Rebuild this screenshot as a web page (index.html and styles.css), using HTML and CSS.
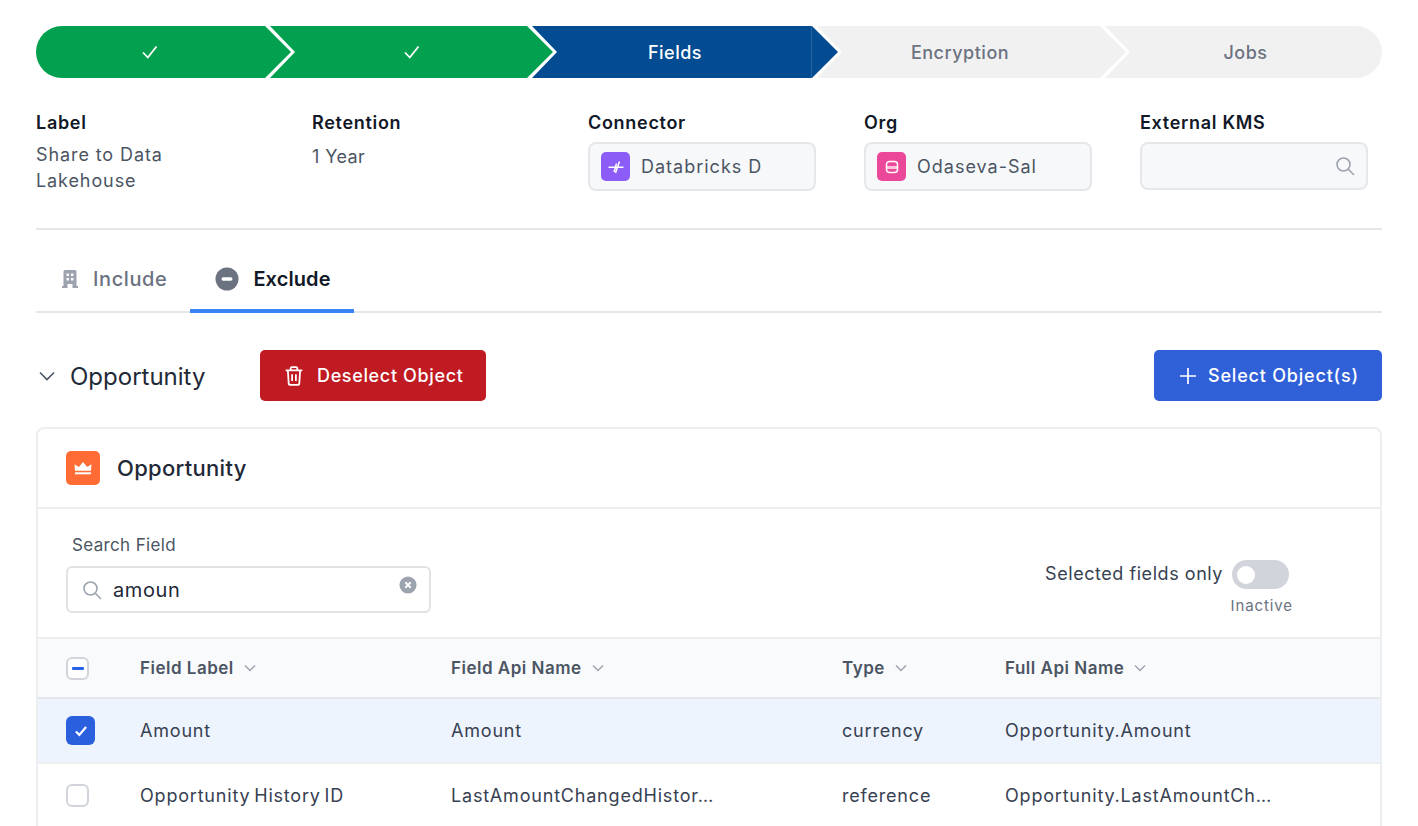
FILE: index.html
```html
<!DOCTYPE html>
<html lang="en">
<head>
<meta charset="utf-8">
<title>Fields</title>
<link rel="stylesheet" href="styles.css">
</head>
<body>
<main class="page">
  <nav class="stepper">
    <div class="step step-first step-done step-a"><svg class="step-check" viewBox="0 0 20 20"><path d="M3 10.500 7.800 15.500 16.500 4.500"/></svg></div>
    <div class="step step-done step-b"><svg class="step-check" viewBox="0 0 20 20"><path d="M3 10.500 7.800 15.500 16.500 4.500"/></svg></div>
    <div class="step step-active step-c">Fields</div>
    <div class="step step-todo step-d">Encryption</div>
    <div class="step step-last step-todo step-e">Jobs</div>
  </nav>

  <section class="info">
    <div class="info-col"><div class="info-label">Label</div><div class="info-text">Share to Data<br>Lakehouse</div></div>
    <div class="info-col"><div class="info-label">Retention</div><div class="info-text info-text-single">1 Year</div></div>
    <div class="info-col"><div class="info-label">Connector</div>
      <div class="field"><span class="chip chip-purple"><svg viewBox="0 0 20 20"><path d="M2.500 10.200h15M13.500 4.500 9.500 16M10.500 6.500 8 15"/></svg></span><span>Databricks D</span></div></div>
    <div class="info-col"><div class="info-label">Org</div>
      <div class="field"><span class="chip chip-pink"><svg viewBox="0 0 20 20"><rect class="chip-band" x="4.500" y="9" width="11" height="3"/><rect x="4.500" y="4.500" width="11" height="11" rx="3"/></svg></span><span>Odaseva-Sal</span></div></div>
    <div class="info-col"><div class="info-label">External KMS</div>
      <div class="field field-search"><svg class="icon-search" viewBox="0 0 20 20"><circle cx="8.500" cy="8.500" r="6.500"/><path d="m13.300 13.300 5.700 5.700"/></svg></div></div>
  </section>

  <div class="tabs">
    <div class="tab"><svg class="tab-building" viewBox="0 0 16 18"><path fill-rule="evenodd" d="M1.500 1.500A1.500 1.500 0 0 1 3 0h10a1.500 1.500 0 0 1 1.500 1.500V16H16v2h-5.500v-4h-5v4H0v-2h1.500V1.500ZM4.500 3.500v2.500h2.500V3.500H4.500Zm4.500 0v2.500h2.500V3.500H9ZM4.500 8v2.500h2.500V8H4.500Zm4.500 0v2.500h2.500V8H9Z"/></svg><span>Include</span></div>
    <div class="tab tab-active"><svg class="tab-minus" viewBox="0 0 24 24"><circle cx="12" cy="12" r="11.500"/><rect x="6.500" y="10.300" width="11" height="3.400" rx="1.700"/></svg><span>Exclude</span></div>
  </div>

  <div class="toolbar">
    <div class="toolbar-left">
      <svg class="chevron-lg" viewBox="0 0 16 10"><path d="m1 1.500 7 7 7-7"/></svg>
      <span class="toolbar-title">Opportunity</span>
      <button class="btn btn-red"><svg class="btn-trash" viewBox="2 1 16 18"><path d="M2.500 5h15M7 5V3.200C7 2.500 7.500 2 8.200 2h3.600c.7 0 1.200.5 1.200 1.200V5M4.500 5l.7 11.200c0 1 .8 1.800 1.800 1.800h6c1 0 1.800-.8 1.800-1.800L15.500 5M8.300 8.500v6M11.700 8.500v6"/></svg>Deselect Object</button>
    </div>
    <button class="btn btn-blue"><svg class="btn-plus" viewBox="0 0 18 18"><path d="M9 1v16M1 9h16"/></svg>Select Object(s)</button>
  </div>

  <section class="card">
    <header class="card-head">
      <span class="card-icon"><svg viewBox="0 0 20 20"><path d="M2 12.800 1.500 6.300 5.800 9 10 4l4.200 5 4.300-2.700-.5 6.500Z"/><rect x="2" y="14.300" width="16" height="2"/></svg></span>
      <span class="card-title">Opportunity</span>
    </header>
    <div class="filters">
      <div class="search-block">
        <div class="search-label">Search Field</div>
        <div class="search-box">
          <svg class="icon-search icon-search-left" viewBox="0 0 20 20"><circle cx="8.500" cy="8.500" r="6.500"/><path d="m13.300 13.300 5.700 5.700"/></svg>
          <span class="search-value">amoun</span>
          <svg class="search-clear" viewBox="0 0 20 20"><circle cx="10" cy="10" r="9.500"/><path d="m7 7 6 6M13 7l-6 6"/></svg>
        </div>
      </div>
      <div class="toggle-block">
        <div class="toggle-row"><span class="toggle-label">Selected fields only</span><span class="toggle"><span class="toggle-knob"></span></span></div>
        <div class="toggle-state">Inactive</div>
      </div>
    </div>
    <div class="row row-head">
      <span class="cb cb-mixed"><span class="cb-dash"></span></span>
      <span class="th">Field Label<svg class="chevron" viewBox="0 0 12 8"><path d="m1 1.500 5 5 5-5"/></svg></span>
      <span class="th">Field Api Name<svg class="chevron" viewBox="0 0 12 8"><path d="m1 1.500 5 5 5-5"/></svg></span>
      <span class="th">Type<svg class="chevron" viewBox="0 0 12 8"><path d="m1 1.500 5 5 5-5"/></svg></span>
      <span class="th">Full Api Name<svg class="chevron" viewBox="0 0 12 8"><path d="m1 1.500 5 5 5-5"/></svg></span>
    </div>
    <div class="row row-body row-selected">
      <span class="cb cb-on"><svg viewBox="0 0 16 16"><path d="m3.500 8.500 3 3 6-7"/></svg></span>
      <span class="td">Amount</span><span class="td">Amount</span><span class="td">currency</span><span class="td">Opportunity.Amount</span>
    </div>
    <div class="row row-body">
      <span class="cb"></span>
      <span class="td">Opportunity History ID</span><span class="td">LastAmountChangedHistor…</span><span class="td">reference</span><span class="td">Opportunity.LastAmountCh…</span>
    </div>
  </section>
</main>
</body>
</html>
```
FILE: styles.css
```css
* { box-sizing: border-box; }
html, body { margin: 0; height: 826px; overflow: hidden; background: #fff; }
body { font-family: Inter, "Liberation Sans", sans-serif; color: #111827; }
.page { padding: 26px 36px 0; }

/* stepper */
.stepper { display: flex; height: 52px; }
.step { height: 52px; display: flex; align-items: center; justify-content: center; font-size: 18px; font-weight: 500; letter-spacing: .5px; flex: none; margin-right: -21px; }
.step-first { border-radius: 26px 0 0 26px; }
.step-last { border-radius: 0 26px 26px 0; margin-right: 0; }
.step-done { background: #03a04f; }
.step-active { background: linear-gradient(to right, #034c92 279px, #2a649f 279px, #2a649f 280px, #034c92 280px); color: #fff; }
.step-todo { background: #f1f1f2; color: #6b7280; }
.step-a { width: 255px; padding-right: 27px; clip-path: polygon(0 0, 229px 0, 100% 50%, 229px 100%, 0 100%); }
.step-b { width: 283px; clip-path: polygon(0 0, 257px 0, 100% 50%, 257px 100%, 0 100%, 25px 50%); }
.step-c { width: 306px; padding-right: 20px; clip-path: polygon(0 0, 280px 0, 100% 50%, 280px 100%, 0 100%, 25px 50%); }
.step-d { width: 309px; padding-right: 23px; clip-path: polygon(0 0, 283px 0, 100% 50%, 283px 100%, 0 100%, 25px 50%); }
.step-e { width: 277px; padding-left: 4px; clip-path: polygon(0 0, 100% 0, 100% 100%, 0 100%, 25px 50%); }
.step-check { width: 20px; height: 20px; fill: none; stroke: #fff; stroke-width: 1.800; }

/* info */
.info { display: grid; grid-template-columns: repeat(5, 228px); column-gap: 48px; margin-top: 32px; height: 118px; }
.info-label { font-size: 18px; font-weight: 600; line-height: 26px; color: #111827; letter-spacing: .7px; }
.info-text { font-size: 18px; line-height: 26px; color: #4b5563; margin-top: 6px; letter-spacing: .9px; }
.info-text-single { margin-top: 8px; letter-spacing: .4px; }
.field { height: 49px; margin-top: 6px; width: 228px; background: #f7f8fa; border: 2px solid #e5e7eb; border-radius: 8px; display: flex; align-items: center; padding: 0 11px; gap: 11px; font-size: 18px; color: #4b5563; letter-spacing: 1px; }
.field-search { justify-content: flex-end; height: 48px; }
.chip { width: 29px; height: 29px; border-radius: 5px; display: flex; align-items: center; justify-content: center; flex: none; }
.chip svg { width: 20px; height: 20px; fill: none; stroke: #fff; stroke-width: 1.500; }
.chip-purple { background: #8b5cf6; }
.chip-pink { background: #ec4899; }
.chip-pink .chip-band { fill: #fbc4de; stroke: none; }
.icon-search { width: 20px; height: 20px; fill: none; stroke: #9ca3af; stroke-width: 1.600; flex: none; }

/* tabs */
.tabs { display: flex; height: 85px; border-top: 2px solid #e5e7eb; border-bottom: 2px solid #e5e7eb; }
.tab { display: flex; align-items: center; gap: 15px; font-size: 20px; font-weight: 500; letter-spacing: .6px; color: #6b7280; padding: 28px 23px 11px 26px; height: 85px; margin-top: -2px; }
.tab-active { color: #111827; font-weight: 600; gap: 14px; padding-left: 25px; padding-bottom: 7px; letter-spacing: .1px; border-bottom: 4px solid #3b82f6; }
.tab-building { width: 16px; height: 18px; fill: #9ca3af; }
.tab-minus { width: 24px; height: 24px; fill: #6b7280; }
.tab-minus rect { fill: #fff; }

/* toolbar */
.toolbar { display: flex; justify-content: space-between; align-items: center; margin-top: 37px; height: 51px; }
.toolbar-left { display: flex; align-items: center; }
.chevron-lg { width: 16px; height: 10px; margin-left: 3px; fill: none; stroke: #4b5563; stroke-width: 1.600; }
.toolbar-title { font-size: 24px; line-height: 53px; padding-top: 2px; color: #1f2937; margin-left: 15px; width: 190px; }
.btn { height: 51px; border: 0; border-radius: 5px; display: flex; align-items: center; color: #fff; font-family: inherit; font-size: 18px; font-weight: 500; }
.btn-red { width: 226px; background: #c01a22; padding-left: 25px; gap: 14px; letter-spacing: .65px; }
.btn-blue { width: 228px; background: #2f60d8; padding-left: 25px; gap: 11px; letter-spacing: .8px; }
.btn-trash { width: 18px; height: 20px; fill: none; stroke: #fff; stroke-width: 1.600; }
.btn-plus { width: 18px; height: 18px; fill: none; stroke: #fff; stroke-width: 1.700; }

/* card */
.card { margin-top: 26px; border: 2px solid #eceef0; border-bottom: 0; border-radius: 8px 8px 0 0; }
.card-head { height: 80px; display: flex; align-items: center; padding-left: 28px; gap: 17px; border-bottom: 2px solid #eceef0; }
.card-icon { width: 34px; height: 34px; background: #ff6b35; border-radius: 5px; display: flex; align-items: center; justify-content: center; }
.card-icon svg { width: 20px; height: 20px; fill: #fff; }
.card-title { font-size: 22px; font-weight: 500; color: #1f2937; letter-spacing: .3px; }
.filters { height: 128px; display: flex; justify-content: space-between; padding: 25px 91px 0 28px; }
.search-label { font-size: 17px; line-height: 22px; color: #4b5563; margin-left: 6px; letter-spacing: .35px; }
.search-box { margin-top: 10px; width: 365px; height: 47px; border: 2px solid #e0e2e6; border-radius: 6px; display: flex; align-items: center; padding: 0 12px 0 14px; }
.search-value { font-size: 20px; color: #1f2937; margin-left: 11px; flex: 1; letter-spacing: .6px; }
.search-clear { width: 18px; height: 18px; margin-top: -9px; fill: #9ca3af; stroke: #fff; stroke-width: 2.200; }
.search-clear circle { stroke: none; }
.toggle-block { padding-top: 26px; }
.toggle-row { display: flex; align-items: center; gap: 9px; }
.toggle-label { font-size: 18px; color: #374151; letter-spacing: .55px; padding-bottom: 2px; }
.toggle { width: 57px; height: 29px; border-radius: 15px; background: #d1d5db; display: flex; align-items: center; padding-left: 5px; }
.toggle-knob { width: 18px; height: 18px; border-radius: 50%; background: #fff; }
.toggle-state { font-size: 15px; color: #6b7280; text-align: right; margin-top: 7px; margin-right: -4px; letter-spacing: .9px; }

/* table */
.row { display: grid; grid-template-columns: 74px 311px 391px 163px 1fr; align-items: center; padding-left: 28px; }
.row-head { height: 62px; background: #f9fafb; border-top: 2px solid #eceef0; border-bottom: 2px solid #e5e7eb; }
.row-body { height: 65px; border-bottom: 2px solid #eceef0; }
.row-selected { background: #eef4fe; }
.th { font-size: 17px; font-weight: 600; color: #4b5563; display: flex; align-items: center; gap: 10px; letter-spacing: .5px; }
.td { font-size: 18px; color: #374151; letter-spacing: .8px; word-spacing: -2px; }
.chevron { width: 12px; height: 8px; fill: none; stroke: #9ca3af; stroke-width: 1.400; }
.cb { width: 23px; height: 23px; border: 2px solid #d1d5db; border-radius: 6px; background: #fff; display: flex; align-items: center; justify-content: center; }
.cb-dash { width: 12px; height: 3px; background: #2563eb; border-radius: 1px; }
.cb-on { width: 29px; height: 29px; background: #2a5fdd; border: 0; }
.cb-on svg { width: 18px; height: 18px; fill: none; stroke: #fff; stroke-width: 2; }
```
